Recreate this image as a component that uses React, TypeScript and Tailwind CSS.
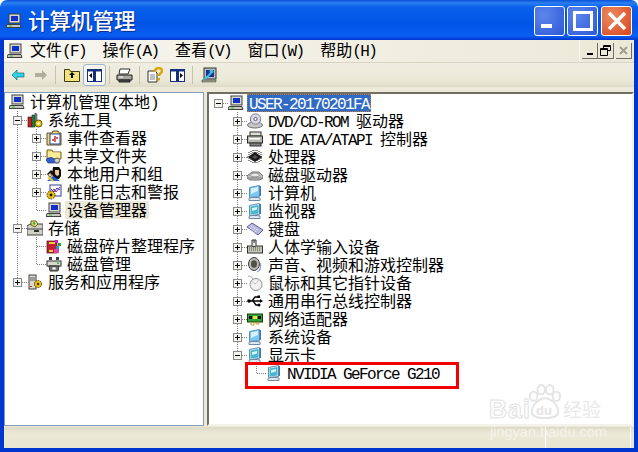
import type { ReactNode } from "react";

// tree connector cell: 19x18
function Cell({ kind }: { kind: string }) {
  const dots = { stroke: "#808080", strokeDasharray: "1 1", strokeWidth: 1, fill: "none" };
  const exp = kind[0] === "+" || kind[0] === "-";
  const tail = exp ? kind[1] : kind;
  return (
    <svg width="19" height="18" className="shrink-0" shapeRendering="crispEdges">
      {(tail === "T" || tail === "|") && <path d="M9.5 0V18" {...dots} />}
      {tail === "L" && <path d="M9.5 0V9" {...dots} />}
      {tail !== "|" && tail !== " " && tail !== undefined && <path d="M10 9.5H19" {...dots} />}
      {tail === undefined && <path d="M14 9.5H19" {...dots} />}
      {exp && (
        <g>
          <rect x="5.5" y="5.5" width="8" height="8" fill="#f4f3ee" stroke="#8a8a8a" />
          <path d="M7 9.5H12" stroke="#000" />
          {kind[0] === "+" && <path d="M9.5 7V12" stroke="#000" />}
        </g>
      )}
    </svg>
  );
}

const I = ({ children }: { children: ReactNode }) => (
  <svg width="16" height="16" viewBox="0 0 16 16" className="shrink-0">
    {children}
  </svg>
);

const PC = () => (
  <I>
    <rect x="3" y="1" width="11" height="9" fill="#d8d8d0" stroke="#404040" />
    <rect x="5" y="3" width="7" height="5" fill="#1030c8" />
    <path d="M1 11.5h13l1 3H0z" fill="#c8c8c0" stroke="#404040" />
    <rect x="3" y="12.5" width="3" height="1" fill="#30c030" />
  </I>
);
const Tools = () => (
  <I>
    <rect x="1" y="5" width="4" height="10" fill="#c02020" stroke="#401010" strokeWidth=".6" />
    <rect x="5" y="3" width="3" height="12" fill="#208040" stroke="#104020" strokeWidth=".6" />
    <path d="M8 1l2 1v8H8z" fill="#808890" stroke="#303030" strokeWidth=".5" />
    <circle cx="11.5" cy="11.5" r="3.5" fill="#e8c820" stroke="#605000" />
    <circle cx="11.5" cy="11.5" r="1.2" fill="#fff" />
  </I>
);
const EventLog = () => (
  <I>
    <path d="M1 3h5l1-2h5l1 2h2v12H1z" fill="#f0d870" stroke="#605020" />
    <rect x="4" y="4" width="10" height="10" fill="#fff" stroke="#2040a0" />
    <path d="M9 6v6M6 10h2M10 8h2" stroke="#c02020" strokeWidth="1.4" />
  </I>
);
const Share = () => (
  <I>
    <path d="M1 2h5l1 2h8v7H1z" fill="#f4e070" stroke="#706020" />
    <path d="M2 5h12M2 7h12M2 9h12" stroke="#fff8c0" />
    <path d="M0 12c2-3 6-3 8-1l5 1v3H2z" fill="#3060d0" stroke="#102060" strokeWidth=".6" />
    <circle cx="11" cy="12.5" r="2.5" fill="#d0d0d0" stroke="#606060" />
  </I>
);
const Users = () => (
  <I>
    <path d="M7 1h6l2 3v6l-2 3H8L6 8z" fill="#101010" />
    <path d="M9 4h4v5l-2 1-2-2z" fill="#f0c8a0" />
    <path d="M1 8l4-4 3 3-4 5z" fill="#101010" />
    <path d="M2 9l2-2 2 2-2 2z" fill="#f0c8a0" />
    <path d="M1 15l6-5 7 5z" fill="#3060d0" />
    <path d="M2 11l5 4" stroke="#e8d020" strokeWidth="2" />
  </I>
);
const Perf = () => (
  <I>
    <rect x="4" y="1" width="11" height="11" fill="#fff" stroke="#304090" />
    <path d="M5 9l3-4 2 3 4-5" stroke="#c02060" fill="none" />
    <path d="M5 5l3 3 3-4 3 2" stroke="#2040d0" fill="none" />
    <circle cx="5" cy="11" r="4" fill="#e8c020" stroke="#403000" strokeDasharray="1.5 1" />
    <circle cx="5" cy="11" r="1.4" fill="#201800" />
  </I>
);
const Storage = () => (
  <I>
    <path d="M0 6l3-2h13v11H0z" fill="#d0d0c8" stroke="#404040" />
    <path d="M0 9h16" stroke="#404040" />
    <rect x="7" y="10" width="5" height="2" fill="#303030" />
    <path d="M4 1l5 0 2 3-3 3-4-2z" fill="#e8e060" stroke="#606020" />
    <circle cx="7" cy="3.5" r="1.2" fill="#30a060" />
  </I>
);
const Defrag = () => (
  <I>
    <rect x="1" y="3" width="10" height="12" fill="#c02030" stroke="#501010" strokeWidth=".7" />
    <path d="M3 5h6M3 13h4" stroke="#e8d040" strokeWidth="2" />
    <rect x="9" y="2" width="3" height="3" fill="#c020c0" />
    <rect x="12" y="5" width="3" height="3" fill="#20a040" />
    <rect x="10" y="8" width="3" height="3" fill="#2090e0" />
    <rect x="8" y="11" width="5" height="4" fill="#e040a0" />
  </I>
);
const DiskMgr = () => (
  <I>
    <path d="M3 1h3v3H3zM10 1h3v3h-3z" fill="#404040" />
    <rect x="1" y="5" width="14" height="5" fill="#d8d8d0" stroke="#303030" />
    <path d="M3 10h10l-1 5H4z" fill="#808080" stroke="#303030" />
    <rect x="6" y="11" width="4" height="3" fill="#fff" stroke="#303030" strokeWidth=".5" />
    <rect x="11" y="6.5" width="2" height="1.5" fill="#30c040" />
  </I>
);
const Services = () => (
  <I>
    <rect x="2" y="1" width="7" height="14" fill="#d8d8d0" stroke="#404040" />
    <path d="M3 4h5M3 6h5" stroke="#606060" />
    <rect x="3" y="12" width="2" height="1" fill="#d02020" />
    <circle cx="11" cy="10" r="3.6" fill="#e8c020" stroke="#504000" strokeDasharray="1.5 .8" />
    <circle cx="11" cy="10" r="1.2" fill="#403000" />
  </I>
);
const Dvd = () => (
  <I>
    <ellipse cx="8" cy="12" rx="7.5" ry="3" fill="#c8c8c8" stroke="#707070" />
    <circle cx="8.5" cy="6" r="5.2" fill="#d8d8e8" stroke="#808090" />
    <circle cx="8.5" cy="6" r="1.6" fill="#fff" stroke="#606060" />
  </I>
);
const Ide = () => (
  <I>
    <rect x="3" y="1" width="11" height="4" fill="#e0e0d8" stroke="#303030" />
    <rect x="0.5" y="5" width="15" height="7" fill="#b8b8b0" stroke="#303030" />
    <rect x="2" y="7" width="11" height="1.5" fill="#fff" />
    <rect x="3" y="12" width="11" height="3" fill="#808080" stroke="#303030" />
  </I>
);
const Cpu = () => (
  <I>
    <path d="M2 3v10M4 2v12M6 1v14M8 1v14M10 1v14M12 2v12M14 3v10M0 8h16" stroke="#202020" strokeDasharray="1 1" />
    <path d="M1 8l7-5 7 5-7 5z" fill="#181818" />
    <path d="M5 8l3-2 3 2-3 2z" fill="#505050" />
  </I>
);
const Hdd = () => (
  <I>
    <path d="M0 9l5-4h7l4 4v2l-3 2H3l-3-2z" fill="#c0c0c0" stroke="#707070" />
    <ellipse cx="8" cy="8" rx="4.5" ry="2" fill="#e8e8e8" stroke="#909090" />
    <path d="M1 11h14" stroke="#808080" />
  </I>
);
const Tower = () => (
  <I>
    <path d="M2.500 2.500l10-2v11l-10 1z" fill="#7cc8f4" stroke="#6090b8" />
    <path d="M4 3.500l7-1.500v4l-7 3z" fill="#d8f2ff" />
    <path d="M4 12.500h6l3 .5v2.500H2V13.500z" fill="#dfe6ee" stroke="#7088a0" />
    <rect x="12.500" y="1" width="1.500" height="10" fill="#4878a8" />
  </I>
);
const Monitor = () => (
  <I>
    <path d="M2.500 2.500l10-2v11l-10 1z" fill="#e4ecf4" stroke="#6090b8" />
    <path d="M3.500 3.500l8-1.500v8.500l-8 1z" fill="#48b8d0" />
    <path d="M5 5l5-1v2.500l-5 1.500z" fill="#d8f4ec" />
    <path d="M4 12.500h6l3 .5v2.500H2V13.500z" fill="#dfe6ee" stroke="#7088a0" />
    <rect x="12.500" y="1" width="1.500" height="10" fill="#4878a8" />
  </I>
);
const Keyboard = () => (
  <I>
    <path d="M0 6l5-4 11 7-5 5z" fill="#b8b8e0" stroke="#606098" />
    <path d="M4 5l7 4.5M3 7l7 4.5M2 8.5l6 3.8" stroke="#f0f0ff" strokeDasharray="1 1" />
  </I>
);
const Hid = () => (
  <I>
    <rect x="0.5" y="7" width="15" height="7" fill="#c8c8b8" stroke="#303030" />
    <path d="M2 9h12M2 11h12" stroke="#505050" strokeDasharray="1 1" />
    <path d="M5 1h4v6c0 1-4 1-4 0z" fill="#e8e8e8" stroke="#303030" />
    <path d="M7 1v3" stroke="#303030" />
  </I>
);
const Speaker = () => (
  <I>
    <ellipse cx="7" cy="7" rx="5.5" ry="6.5" fill="#b8b8b0" stroke="#404040" />
    <ellipse cx="7" cy="7" rx="3" ry="3.8" fill="#505048" />
    <path d="M13 6c1 2 1 5-1 8M10 15c2-1 3-2 3.500-3" stroke="#8080e0" fill="none" />
  </I>
);
const Mouse = () => (
  <I>
    <path d="M1 1c2 0 4 1 5 3" stroke="#a0a0a0" fill="none" />
    <ellipse cx="9" cy="9.500" rx="6" ry="6" fill="#f0f0f0" stroke="#909090" />
    <path d="M4 6l4 3 4-4" stroke="#c0c0c0" fill="none" />
  </I>
);
const Usb = () => (
  <I>
    <path d="M2 8h11M5 8l3-4h3M6 8l3 4h2" stroke="#000" strokeWidth="1.300" fill="none" />
    <circle cx="2" cy="8" r="1.800" fill="#000" />
    <path d="M13 6l3 2-3 2z" fill="#000" />
    <rect x="10.500" y="2.500" width="2.500" height="2.500" fill="#000" />
    <circle cx="12" cy="12" r="1.500" fill="#000" />
  </I>
);
const Net = () => (
  <I>
    <rect x="0.500" y="3" width="15" height="8" fill="#38a038" stroke="#104010" />
    <rect x="2" y="5" width="3" height="3" fill="#101010" />
    <rect x="6" y="5" width="4" height="3" fill="#e8e040" />
    <rect x="11" y="5" width="3" height="3" fill="#101010" />
    <path d="M4 11v3h3v-3M9 11v2h3v-2" stroke="#c8a020" fill="none" />
  </I>
);
const Mgr = () => (
  <I>
    <rect x="3" y="1" width="12" height="11" fill="#b8c0c0" stroke="#303030" />
    <rect x="5" y="3" width="8" height="7" fill="#183090" />
    <path d="M1 15l9-9" stroke="#40c0e0" strokeWidth="2" />
    <circle cx="10.500" cy="4.500" r="2" fill="#40c0e0" />
    <path d="M1 13h14v2H1z" fill="#a0a090" stroke="#404030" strokeWidth=".5" />
  </I>
);

function Txt({ s }: { s: string }) {
  return (
    <span>
      {s.split(/([\x00-\x7f]+)/).filter(Boolean).map((p, i) =>
        /^[\x00-\x7f]/.test(p) ? (
          <span key={i} className="inline-block h-[17px] leading-[17px] font-['Liberation_Mono',monospace] text-[16px] tracking-[-1.6px] whitespace-pre">
            {p}
          </span>
        ) : (
          <span key={i} className="inline-block h-[17px] leading-[17px] font-['Noto_Sans_CJK_SC',sans-serif] text-[16px]">
            {p}
          </span>
        )
      )}
    </span>
  );
}

type RowT = { cells: string[]; icon: ReactNode; label: string; sel?: "blue" | "gray" };

function Row({ cells, icon, label, sel }: RowT) {
  const cls =
    sel === "blue"
      ? "bg-[#316ac5] text-white outline-1 outline-dotted outline-[#c08030] -outline-offset-1"
      : sel === "gray"
        ? "bg-[#ece9d8] text-black"
        : "text-black";
  return (
    <div className="flex h-[18px] items-center">
      {cells.map((c, i) => (
        <Cell key={i} kind={c} />
      ))}
      {icon}
      <div className={`ml-[3px] px-[2px] h-[18px] leading-[18px] whitespace-nowrap ${cls}`}>
        <Txt s={label} />
      </div>
    </div>
  );
}

const leftTree: RowT[] = [
  { cells: ["-T"], icon: <Tools />, label: "系统工具" },
  { cells: ["|", "+T"], icon: <EventLog />, label: "事件查看器" },
  { cells: ["|", "+T"], icon: <Share />, label: "共享文件夹" },
  { cells: ["|", "+T"], icon: <Users />, label: "本地用户和组" },
  { cells: ["|", "+T"], icon: <Perf />, label: "性能日志和警报" },
  { cells: ["|", "L"], icon: <PC />, label: "设备管理器", sel: "gray" },
  { cells: ["-T"], icon: <Storage />, label: "存储" },
  { cells: ["|", "T"], icon: <Defrag />, label: "磁盘碎片整理程序" },
  { cells: ["|", "L"], icon: <DiskMgr />, label: "磁盘管理" },
  { cells: ["+L"], icon: <Services />, label: "服务和应用程序" },
];

const rightTree: RowT[] = [
  { cells: ["-"], icon: <PC />, label: "USER-20170201FA", sel: "blue" },
  { cells: [" ", "+T"], icon: <Dvd />, label: "DVD/CD-ROM 驱动器" },
  { cells: [" ", "+T"], icon: <Ide />, label: "IDE ATA/ATAPI 控制器" },
  { cells: [" ", "+T"], icon: <Cpu />, label: "处理器" },
  { cells: [" ", "+T"], icon: <Hdd />, label: "磁盘驱动器" },
  { cells: [" ", "+T"], icon: <Tower />, label: "计算机" },
  { cells: [" ", "+T"], icon: <Monitor />, label: "监视器" },
  { cells: [" ", "+T"], icon: <Keyboard />, label: "键盘" },
  { cells: [" ", "+T"], icon: <Hid />, label: "人体学输入设备" },
  { cells: [" ", "+T"], icon: <Speaker />, label: "声音、视频和游戏控制器" },
  { cells: [" ", "+T"], icon: <Mouse />, label: "鼠标和其它指针设备" },
  { cells: [" ", "+T"], icon: <Usb />, label: "通用串行总线控制器" },
  { cells: [" ", "+T"], icon: <Net />, label: "网络适配器" },
  { cells: [" ", "+T"], icon: <Tower />, label: "系统设备" },
  { cells: [" ", "-L"], icon: <Monitor />, label: "显示卡" },
  { cells: [" ", " ", "L"], icon: <Monitor />, label: "NVIDIA GeForce G210" },
];

const TbBtn = ({ children, on }: { children: ReactNode; on?: boolean }) => (
  <div
    className={`w-[23px] h-[22px] flex items-center justify-center rounded-[3px] ${
      on ? "border border-[#9db3cf] bg-[#f6f5ee]" : ""
    }`}
  >
    {children}
  </div>
);
const Sep = ({ cls }: { cls: string }) => <div className={`w-px h-[18px] bg-[#c5c2b0] ${cls}`} />;

const PanelIcon = ({ right }: { right?: boolean }) => (
  <svg width="15" height="13" viewBox="0 0 15 13">
    <rect x=".5" y=".5" width="14" height="12" fill="#fff" stroke="#16307f" />
    <rect x=".5" y=".5" width="14" height="2" fill="#16307f" />
    <rect x="6" y="1" width="3" height="11" fill="#16307f" />
    {right ? <path d="M10 4l3 2.500-3 2.500z" fill="#000" /> : <path d="M5 4l-3 2.500 3 2.500z" fill="#000" />}
  </svg>
);

const DocBtn = ({ children, cls = "" }: { children: ReactNode; cls?: string }) => (
  <div className={`w-4 h-[16px] bg-[#ece9d8] border-r border-b border-[#716f64] border-t-white border-l-white flex items-center justify-center ${cls}`}>
    {children}
  </div>
);

export default function App() {
  return (
    <div className="relative w-[638px] h-[452px] overflow-hidden bg-white">
      <div className="w-full h-full flex flex-col rounded-t-[7px] bg-[#0a3fd6] bg-[linear-gradient(180deg,#0a50d8_0px,#2a80f0_3px,#0a60ec_7px,#0055e6_24px,#0a5ff0_36px,#0036d0_40px,#0036d0_100%)]">
        {/* title bar */}
        <div className="h-10 shrink-0 flex items-center pl-[6px] pr-[6px] pt-[2px]">
          <PC />
          <span className="ml-[6px] -mt-[2px] font-['Noto_Sans_CJK_SC',sans-serif] text-[21.5px] leading-[26px] font-medium text-white [text-shadow:1px_1px_#0f2f90]">
            计算机管理
          </span>
          <div className="ml-auto flex gap-[2px]">
            <div className="w-[31px] h-[30px] rounded-[3px] border border-white bg-[radial-gradient(circle_at_30%_30%,#5d86ea,#2c58d8)] flex items-end pl-[6px] pb-[7px]">
              <div className="w-[11px] h-[4px] bg-white" />
            </div>
            <div className="w-[31px] h-[30px] rounded-[3px] border border-white bg-[radial-gradient(circle_at_30%_30%,#5d86ea,#2c58d8)] flex items-center justify-center">
              <div className="w-[20px] h-[20px] border-[3px] border-white" />
            </div>
            <div className="w-[31px] h-[30px] ml-px rounded-[3px] border border-white bg-[radial-gradient(circle_at_30%_30%,#ea8a60,#d8451c)] flex items-center justify-center">
              <svg width="20" height="20" viewBox="0 0 20 20">
                <path d="M2 2L18 18M18 2L2 18" stroke="#fff" strokeWidth="3.500" />
              </svg>
            </div>
          </div>
        </div>

        <div className="flex-1 mx-1 mb-1 flex flex-col bg-[#ece9d8] min-h-0">
          {/* menu */}
          <div className="h-[23px] shrink-0 flex items-center pl-[3px] border-b border-[#d8d4c0] bg-[linear-gradient(90deg,#f7f6f0,#ece9d8)]">
            <PC />
            <div className="ml-[7px] flex gap-[16.5px] text-black leading-[18px]">
              {["文件(F)", "操作(A)", "查看(V)", "窗口(W)", "帮助(H)"].map((m) => (
                <div key={m} className="whitespace-nowrap">
                  <Txt s={m} />
                </div>
              ))}
            </div>
            <div className="ml-auto h-full flex items-center border-l border-[#f8f8f0] pl-[2px] pr-[2px]">
              <DocBtn>
                <div className="w-[6px] h-[2px] bg-black mt-[6px]" />
              </DocBtn>
              <DocBtn cls="">
                <svg width="11" height="11" viewBox="0 0 11 11">
                  <path d="M3.500 3V.5h7v5H8M.5 3.500h7v7h-7zM.5 4.500h7M3.500 1.500h7" stroke="#000" fill="none" />
                </svg>
              </DocBtn>
              <DocBtn cls="ml-[2px]">
                <svg width="9" height="9" viewBox="0 0 9 9">
                  <path d="M1 1l7 7M8 1L1 8" stroke="#a0a090" strokeWidth="2" />
                </svg>
              </DocBtn>
            </div>
          </div>

          {/* toolbar */}
          <div className="h-[24px] shrink-0 flex items-center pl-[2px] bg-[linear-gradient(180deg,#f0eee2,#ece9d8_70%,#dedbc8)]">
            <TbBtn>
              <svg width="14" height="12" viewBox="0 0 14 12">
                <path d="M6 1L1 6l5 5V8h7V4H6z" fill="#28d8e8" stroke="#10506a" strokeWidth=".6" />
              </svg>
            </TbBtn>
            <TbBtn>
              <svg width="14" height="12" viewBox="0 0 14 12">
                <path d="M8 1l5 5-5 5V8H1V4h7z" fill="#b0ae9c" />
              </svg>
            </TbBtn>
            <Sep cls="ml-[3px] mr-[4px]" />
            <TbBtn>
              <svg width="16" height="14" viewBox="0 0 16 14">
                <path d="M.5 1.500h5l1 2h9v10H.5z" fill="#f4e47c" stroke="#403c10" />
                <path d="M8 4l3 3H9v3H7V7H5z" fill="#000" />
              </svg>
            </TbBtn>
            <TbBtn on>
              <PanelIcon />
            </TbBtn>
            <Sep cls="ml-[3px] mr-[3px]" />
            <TbBtn>
              <svg width="17" height="15" viewBox="0 0 17 15">
                <path d="M4 1h10l-2 5H3z" fill="#fff" stroke="#303030" />
                <path d="M1 7h15v5H1z" fill="#a8a8a0" stroke="#202020" />
                <path d="M3 12h11v2H3z" fill="#505050" stroke="#202020" />
                <path d="M3 9h4" stroke="#fff" />
              </svg>
            </TbBtn>
            <Sep cls="ml-[3px] mr-[3px]" />
            <TbBtn>
              <svg width="16" height="16" viewBox="0 0 16 16">
                <path d="M1 4h7l2 2v9H1z" fill="#fff" stroke="#303030" />
                <path d="M3 8h5M3 10h5M3 12h5" stroke="#808080" />
                <path d="M8 5c0-5 7-5 7 -1c0 2-3 2-3 5" stroke="#d8a800" strokeWidth="2.500" fill="none" />
                <rect x="10.500" y="11" width="2.500" height="2.500" fill="#d8a800" />
              </svg>
            </TbBtn>
            <TbBtn>
              <PanelIcon right />
            </TbBtn>
            <Sep cls="ml-[3px] mr-[4px]" />
            <TbBtn>
              <Mgr />
            </TbBtn>
          </div>

          {/* panes */}
          <div className="flex-1 min-h-0 mt-[5px] flex gap-[3px]">
            <div className="w-[200px] h-[334px] border border-[#7f9db9] bg-white overflow-hidden">
              <div className="flex h-[18px] items-center pl-1">
                <PC />
                <div className="ml-[3px] px-[2px] h-[18px] leading-[18px] whitespace-nowrap text-black">
                  <Txt s="计算机管理(本地)" />
                </div>
              </div>
              <div className="pl-[3px]">
                {leftTree.map((r) => (
                  <Row key={r.label} {...r} />
                ))}
              </div>
            </div>
            <div className="relative flex-1 h-[334px] border-t-2 border-l-2 border-[#716f64] border-b-2 border-b-[#f4f3ea] border-r-2 border-r-[#f4f3ea] bg-white overflow-hidden">
              {rightTree.map((r) => (
                <Row key={r.label} {...r} />
              ))}
              {/* red annotation box */}
              <div className="absolute left-[36px] top-[268px] w-[214px] h-[27px] border-[3px] border-[#f40000]" />
            </div>
          </div>

          {/* status bar */}
          <div className="h-[21px] mt-px shrink-0 flex bg-[linear-gradient(180deg,#dcd9c6,#ece9d8_30%,#e8e5d2)]">
            <div className="w-[542px] border-r border-white" />
            <div className="w-[85px] border-r border-white" />
          </div>
        </div>
      </div>

      {/* baidu watermark */}
      <div className="absolute left-[489px] top-[383px] w-[116px] h-[56px] pointer-events-none">
        <span className="absolute left-0 top-[12px] font-['Liberation_Sans',sans-serif] font-bold text-[25px] leading-[28px] tracking-[1px] text-white [-webkit-text-stroke:1px_#e2e2e2]">
          Bai
        </span>
        <svg className="absolute left-[38px] top-0" width="36" height="38" viewBox="0 0 38 38">
          <g fill="#fff" stroke="#e4e4e4" strokeWidth="2">
            <ellipse cx="7" cy="13" rx="4" ry="5" />
            <ellipse cx="15" cy="6" rx="4" ry="5" />
            <ellipse cx="24" cy="6" rx="4" ry="5" />
            <ellipse cx="31" cy="13" rx="4" ry="5" />
            <path d="M19 15c6 0 14 7 14 14 0 6-6 7-14 7S5 35 5 29c0-7 8-14 14-14z" />
          </g>
        </svg>
        <span className="absolute left-[47px] top-[20px] font-['Liberation_Sans',sans-serif] font-bold text-[13px] leading-[16px] text-[#e4e4e4]">
          du
        </span>
        <span className="absolute left-[74px] top-[15px] font-['Noto_Sans_CJK_SC',sans-serif] text-[19px] leading-[22px] text-[#e8e8e8]">
          经验
        </span>
        <span className="absolute left-px top-[41px] font-['Liberation_Sans',sans-serif] text-[14.500px] leading-[16px] text-[#f4f3ea] whitespace-nowrap">
          jingyan.baidu.com
        </span>
      </div>
    </div>
  );
}
